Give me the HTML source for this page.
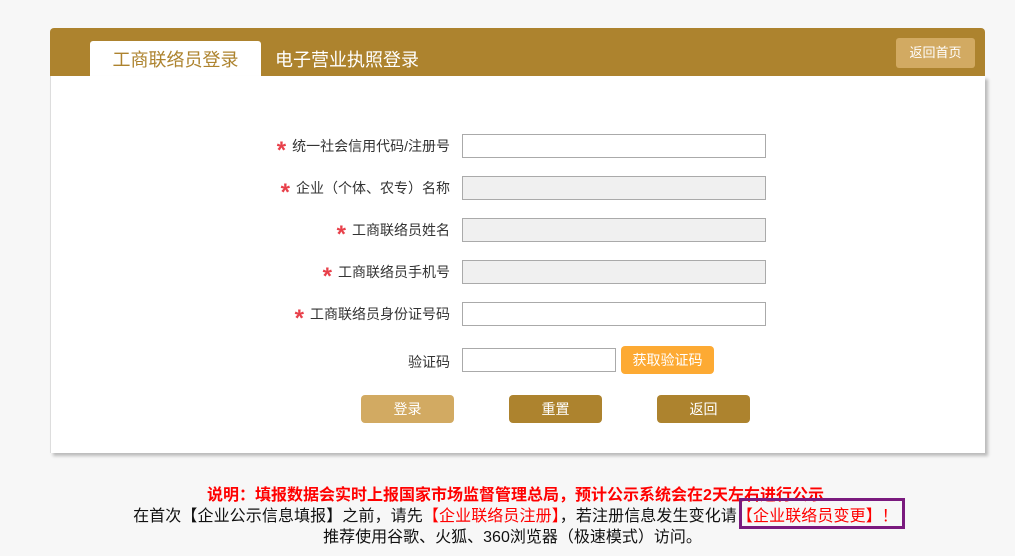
<!DOCTYPE html>
<html><head><meta charset="utf-8"><style>
*{margin:0;padding:0;box-sizing:border-box}
body{width:1015px;height:556px;background:#f7f7f7;font-family:"Liberation Sans","Noto Sans CJK SC",sans-serif;position:relative;overflow:hidden}
.a{position:absolute}
.hdr{left:50px;top:28px;width:935px;height:48px;background:#ad832e;border-radius:4px 4px 0 0}
.tab{left:90px;top:41px;width:171px;height:35px;background:#fff;border-radius:3px 3px 0 0;color:#ad832e;font-size:18px;text-align:center;line-height:38px}
.tab2{left:275px;top:41px;color:#fff;font-size:18px;line-height:38px}
.home{left:896px;top:38px;width:79px;height:30px;background:#d2aa62;border-radius:3px;color:#fff;font-size:13px;text-align:center;line-height:30px}
.body{left:50px;top:76px;width:935px;height:377px;background:#fff;border-left:1px solid #ddd;box-shadow:3px 3px 3px #bbb}
.lab{right:565px;font-size:14px;color:#333;height:24px;line-height:24px;white-space:nowrap}
.lab b{color:#e8404a;font-size:24px;font-weight:bold;vertical-align:-7px;margin-right:6px}
.in{left:462px;width:304px;height:24px;border:1px solid #aaa;background:#fff}
.g{background:#f0f0f0}
.btn{width:93px;height:28px;border-radius:4px;color:#fff;font-size:14px;text-align:center;line-height:28px}
.f{left:0;width:1015px;text-align:center;font-size:16px;color:#111;white-space:nowrap}
.r{color:#f00}
</style></head><body>
<div class="a hdr"></div>
<div class="a tab">工商联络员登录</div>
<div class="a tab2">电子营业执照登录</div>
<div class="a home">返回首页</div>
<div class="a body"></div>
<div class="a lab" style="top:134px"><b>*</b>统一社会信用代码/注册号</div>
<div class="a in" style="top:134px"></div>
<div class="a lab" style="top:176px"><b>*</b>企业（个体、农专）名称</div>
<div class="a in g" style="top:176px"></div>
<div class="a lab" style="top:218px"><b>*</b>工商联络员姓名</div>
<div class="a in g" style="top:218px"></div>
<div class="a lab" style="top:260px"><b>*</b>工商联络员手机号</div>
<div class="a in g" style="top:260px"></div>
<div class="a lab" style="top:302px"><b>*</b>工商联络员身份证号码</div>
<div class="a in" style="top:302px"></div>
<div class="a lab" style="top:350px">验证码</div>
<div class="a in" style="top:348px;width:154px"></div>
<div class="a btn" style="left:621px;top:346px;background:#fdaa33">获取验证码</div>
<div class="a btn" style="left:361px;top:395px;background:#d2aa62">登录</div>
<div class="a btn" style="left:509px;top:395px;background:#ad832e">重置</div>
<div class="a btn" style="left:657px;top:395px;background:#ad832e">返回</div>
<div class="a f r" style="top:481px;font-weight:bold;padding-left:16px">说明：填报数据会实时上报国家市场监督管理总局，预计公示系统会在2天左右进行公示</div>
<div class="a f" style="top:502px;letter-spacing:0.1px;padding-left:16px">在首次【企业公示信息填报】之前，请先<span class="r">【企业联络员注册】</span>，若注册信息发生变化请<span class="r">【企业联络员变更】！</span></div>
<div class="a f" style="top:523px;padding-left:10px">推荐使用谷歌、火狐、360浏览器（极速模式）访问。</div>
<div class="a" style="left:739px;top:498px;width:166px;height:31px;border:3px solid #7a1a7e"></div>
</body></html>
